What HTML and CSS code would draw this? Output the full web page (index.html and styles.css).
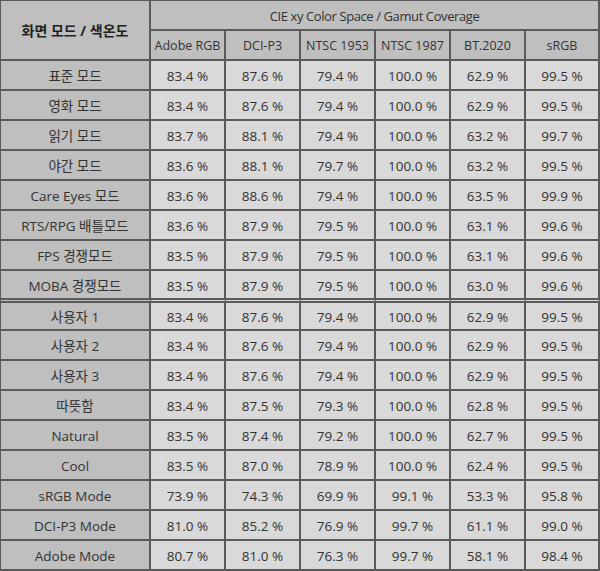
FILE: index.html
```html
<!DOCTYPE html>
<html lang="ko">
<head>
<meta charset="utf-8">
<link rel="stylesheet" href="styles.css">
</head>
<body>
<table class="gamut">
  <colgroup>
    <col class="c-label"><col class="c-val"><col class="c-val"><col class="c-val"><col class="c-val"><col class="c-val"><col class="c-last">
  </colgroup>
  <thead>
    <tr class="h1">
      <th rowspan="2" class="mode-head">화면 모드 / 색온도</th>
      <th colspan="6" class="group-head">CIE xy Color Space / Gamut Coverage</th>
    </tr>
    <tr class="h2">
      <th>Adobe RGB</th><th>DCI-P3</th><th>NTSC 1953</th><th>NTSC 1987</th><th>BT.2020</th><th>sRGB</th>
    </tr>
  </thead>
  <tbody>
    <tr><th>표준 모드</th><td>83.4 %</td><td>87.6 %</td><td>79.4 %</td><td>100.0 %</td><td>62.9 %</td><td>99.5 %</td></tr>
    <tr><th>영화 모드</th><td>83.4 %</td><td>87.6 %</td><td>79.4 %</td><td>100.0 %</td><td>62.9 %</td><td>99.5 %</td></tr>
    <tr><th>읽기 모드</th><td>83.7 %</td><td>88.1 %</td><td>79.4 %</td><td>100.0 %</td><td>63.2 %</td><td>99.7 %</td></tr>
    <tr><th>야간 모드</th><td>83.6 %</td><td>88.1 %</td><td>79.7 %</td><td>100.0 %</td><td>63.2 %</td><td>99.5 %</td></tr>
    <tr><th>Care Eyes 모드</th><td>83.6 %</td><td>88.6 %</td><td>79.4 %</td><td>100.0 %</td><td>63.5 %</td><td>99.9 %</td></tr>
    <tr><th>RTS/RPG 배틀모드</th><td>83.6 %</td><td>87.9 %</td><td>79.5 %</td><td>100.0 %</td><td>63.1 %</td><td>99.6 %</td></tr>
    <tr><th>FPS 경쟁모드</th><td>83.5 %</td><td>87.9 %</td><td>79.5 %</td><td>100.0 %</td><td>63.1 %</td><td>99.6 %</td></tr>
    <tr class="split-above"><th>MOBA 경쟁모드</th><td>83.5 %</td><td>87.9 %</td><td>79.5 %</td><td>100.0 %</td><td>63.0 %</td><td>99.6 %</td></tr>
    <tr class="split-below"><th>사용자 1</th><td>83.4 %</td><td>87.6 %</td><td>79.4 %</td><td>100.0 %</td><td>62.9 %</td><td>99.5 %</td></tr>
    <tr><th>사용자 2</th><td>83.4 %</td><td>87.6 %</td><td>79.4 %</td><td>100.0 %</td><td>62.9 %</td><td>99.5 %</td></tr>
    <tr><th>사용자 3</th><td>83.4 %</td><td>87.6 %</td><td>79.4 %</td><td>100.0 %</td><td>62.9 %</td><td>99.5 %</td></tr>
    <tr><th>따뜻함</th><td>83.4 %</td><td>87.5 %</td><td>79.3 %</td><td>100.0 %</td><td>62.8 %</td><td>99.5 %</td></tr>
    <tr><th>Natural</th><td>83.5 %</td><td>87.4 %</td><td>79.2 %</td><td>100.0 %</td><td>62.7 %</td><td>99.5 %</td></tr>
    <tr><th>Cool</th><td>83.5 %</td><td>87.0 %</td><td>78.9 %</td><td>100.0 %</td><td>62.4 %</td><td>99.5 %</td></tr>
    <tr><th>sRGB Mode</th><td>73.9 %</td><td>74.3 %</td><td>69.9 %</td><td>99.1 %</td><td>53.3 %</td><td>95.8 %</td></tr>
    <tr><th>DCI-P3 Mode</th><td>81.0 %</td><td>85.2 %</td><td>76.9 %</td><td>99.7 %</td><td>61.1 %</td><td>99.0 %</td></tr>
    <tr><th>Adobe Mode</th><td>80.7 %</td><td>81.0 %</td><td>76.3 %</td><td>99.7 %</td><td>58.1 %</td><td>98.4 %</td></tr>
  </tbody>
</table>
</body>
</html>
```
FILE: styles.css
```css
html, body {
  margin: 0;
  padding: 0;
  background: #ffffff;
}

.gamut {
  border-collapse: separate;
  border-spacing: 0;
  table-layout: fixed;
  width: 600px;
  border-top: 1px solid #5a5a5a;
  border-left: 1px solid #5a5a5a;
  font-family: "Open Sans", "Noto Sans CJK KR", sans-serif;
  font-size: 13.5px;
  color: #333333;
}

.c-label { width: 150px; }
.c-val { width: 75px; }
.c-last { width: 74px; }

.gamut th,
.gamut td {
  height: 26px;
  padding: 2px 0 0;
  box-sizing: content-box;
  text-align: center;
  vertical-align: middle;
  white-space: nowrap;
  border-right: 2px solid #5a5a5a;
  border-bottom: 2px solid #5a5a5a;
  line-height: 18px;
}

.gamut thead th {
  background: #bfbfbf;
  font-weight: normal;
  font-size: 12.5px;
}

.gamut thead .group-head {
  font-size: 13px;
  letter-spacing: -0.4px;
}

.gamut thead .mode-head {
  font-weight: bold;
  font-size: 14px;
  color: #222222;
}

.gamut tbody th {
  background: #bfbfbf;
  font-weight: normal;
}

.gamut tbody td {
  background: #d9d9d9;
}

.gamut .split-above th,
.gamut .split-above td {
  height: 25px;
  border-bottom: 5px double #5a5a5a;
}

.gamut .split-below th,
.gamut .split-below td {
  height: 24px;
}
```
